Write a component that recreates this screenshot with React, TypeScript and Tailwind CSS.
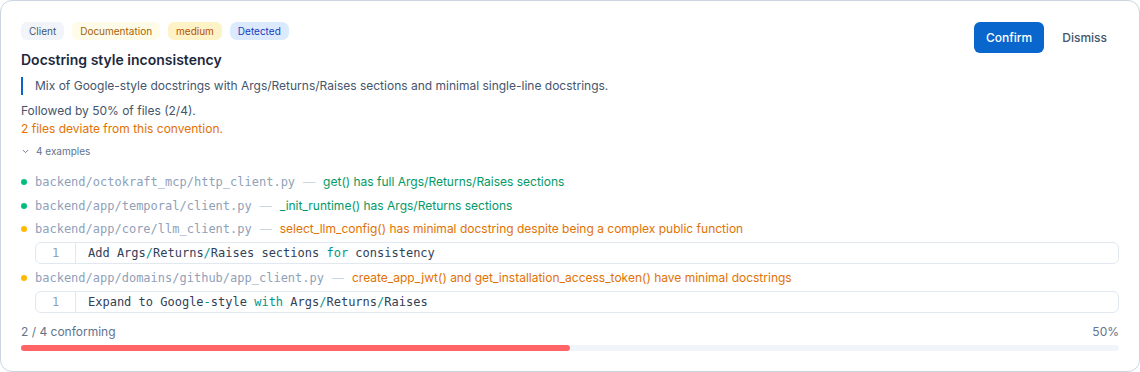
import React from 'react';

type Example = {
  file: string;
  note: string;
  ok: boolean;
  fix?: React.ReactNode;
};

const Sep = () => <span className="text-teal-600">/</span>;

const examples: Example[] = [
  { file: 'backend/octokraft_mcp/http_client.py', note: 'get() has full Args/Returns/Raises sections', ok: true },
  { file: 'backend/app/temporal/client.py', note: '_init_runtime() has Args/Returns sections', ok: true },
  {
    file: 'backend/app/core/llm_client.py',
    note: 'select_llm_config() has minimal docstring despite being a complex public function',
    ok: false,
    fix: (
      <>
        Add Args<Sep />Returns<Sep />Raises sections <span className="text-teal-600">for</span> consistency
      </>
    ),
  },
  {
    file: 'backend/app/domains/github/app_client.py',
    note: 'create_app_jwt() and get_installation_access_token() have minimal docstrings',
    ok: false,
    fix: (
      <>
        Expand to Google<span className="text-teal-600">-</span>style <span className="text-teal-600">with</span> Args<Sep />Returns<Sep />Raises
      </>
    ),
  },
];

const Badge: React.FC<{ className: string; children: React.ReactNode }> = ({ className, children }) => (
  <span className={`inline-flex h-[18px] items-center px-2 text-[10px] leading-none ${className}`}>{children}</span>
);

const CodeLine: React.FC<{ children: React.ReactNode }> = ({ children }) => (
  <div className="ml-[14px] mt-[3px] flex h-[22px] items-stretch rounded-md border border-slate-200 font-['DejaVu_Sans_Mono',monospace] text-[12px]">
    <span className="flex w-10 items-center justify-center border-r border-slate-200 text-slate-400">1</span>
    <span className="self-center whitespace-pre pl-3 text-slate-700">{children}</span>
  </div>
);

export default function App() {
  return (
    <div className="h-[372px] w-[1140px] bg-white font-['Inter',sans-serif]">
      <div className="h-full rounded-xl border border-slate-300 px-5 pt-5">
        <div className="flex items-start justify-between">
          <div>
            <div className="mt-px flex gap-2">
              <Badge className="rounded-md bg-slate-100 text-slate-600">Client</Badge>
              <Badge className="rounded-md bg-yellow-50 text-yellow-700">Documentation</Badge>
              <Badge className="rounded-md bg-amber-100 text-amber-700">medium</Badge>
              <Badge className="rounded-[7px] bg-blue-100 text-blue-800">Detected</Badge>
            </div>
            <h2 className="mt-[9px] text-[14px] font-semibold leading-[22px] text-slate-800">Docstring style inconsistency</h2>
          </div>
          <div className="mt-px flex items-center gap-1.5">
            <button className="h-[31px] rounded-md bg-[#0866cc] px-3 text-[12px] font-medium text-white">Confirm</button>
            <button className="h-[31px] px-3 text-[12px] font-medium text-slate-600">Dismiss</button>
          </div>
        </div>

        <p className="mt-[6px] border-l-2 border-[#0866cc] pl-3 text-[12px] leading-[18px] text-slate-600">
          Mix of Google-style docstrings with Args/Returns/Raises sections and minimal single-line docstrings.
        </p>

        <p className="mt-[7px] text-[12px] leading-[18px] text-slate-600">Followed by 50% of files (2/4).</p>
        <p className="text-[12px] leading-[18px] text-amber-600">2 files deviate from this convention.</p>

        <div className="mt-[6px] flex items-center gap-1.5 text-[10px] text-slate-500">
          <svg width="9" height="9" viewBox="0 0 24 24" fill="none" stroke="currentColor" strokeWidth="2.5" strokeLinecap="round" strokeLinejoin="round">
            <path d="m6 9 6 6 6-6" />
          </svg>
          <span>4 examples</span>
        </div>

        <div className="mt-[13px] flex flex-col">
          {examples.map((ex, i) => (
            <div key={i} className={i === 0 ? '' : i === 3 ? 'mt-[4px]' : 'mt-[3.5px]'}>
              <div className="flex h-[20px] items-center gap-2">
                <span className={`h-[6px] w-[6px] rounded-full ${ex.ok ? 'bg-emerald-500' : 'bg-amber-400'}`} />
                <span className="font-['DejaVu_Sans_Mono',monospace] text-[12px] text-slate-400">{ex.file}</span>
                <span className="text-[12px] text-slate-300">—</span>
                <span className={`text-[12px] ${ex.ok ? 'text-emerald-600' : 'text-amber-600'}`}>{ex.note}</span>
              </div>
              {ex.fix && <CodeLine>{ex.fix}</CodeLine>}
            </div>
          ))}
        </div>

        <div className="mt-[11px] flex items-center justify-between text-[12px] leading-[16px] text-slate-500">
          <span>2 / 4 conforming</span>
          <span>50%</span>
        </div>
        <div className="mt-[5px] h-[6px] w-full rounded-full bg-slate-100">
          <div className="h-full rounded-full bg-red-400" style={{ width: '50%' }} />
        </div>
      </div>
    </div>
  );
}
